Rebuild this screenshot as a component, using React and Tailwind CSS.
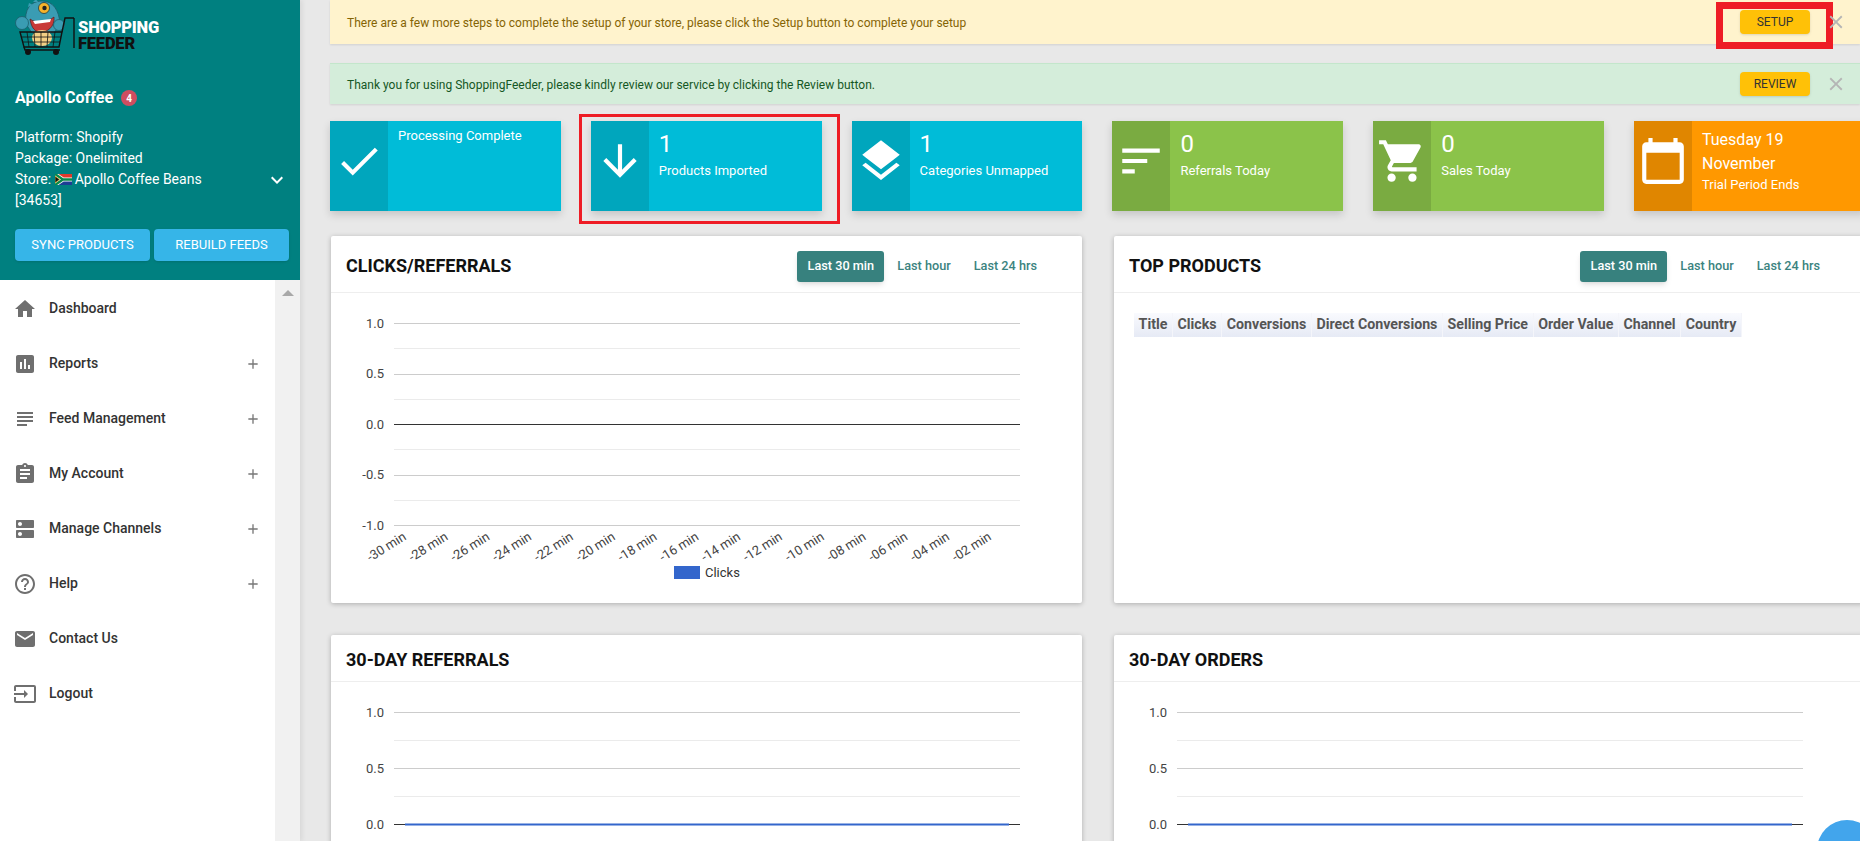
import { MdHome, MdAssessment, MdSubject, MdAssignment, MdDns, MdHelpOutline, MdEmail, MdInput, MdAdd, MdCheck, MdArrowDownward, MdLayers, MdSort, MdShoppingCart, MdCalendarToday, MdKeyboardArrowDown, MdClose } from 'react-icons/md';

const menu = [
  { label: 'Dashboard', icon: MdHome },
  { label: 'Reports', icon: MdAssessment, more: true },
  { label: 'Feed Management', icon: MdSubject, more: true },
  { label: 'My Account', icon: MdAssignment, more: true },
  { label: 'Manage Channels', icon: MdDns, more: true },
  { label: 'Help', icon: MdHelpOutline, more: true },
  { label: 'Contact Us', icon: MdEmail },
  { label: 'Logout', icon: MdInput },
];

const ticks = ['-30 min', '-28 min', '-26 min', '-24 min', '-22 min', '-20 min', '-18 min', '-16 min', '-14 min', '-12 min', '-10 min', '-08 min', '-06 min', '-04 min', '-02 min'];
const columns = ['Title', 'Clicks', 'Conversions', 'Direct Conversions', 'Selling Price', 'Order Value', 'Channel', 'Country'];

function Logo() {
  return (
    <div className="flex items-start h-[60px] pl-[15px]">
      <svg width="62" height="58" viewBox="15 0 62 58" className="shrink-0">
        <path d="M26 24 C24 10 30 1 42 1 C53 1 59 10 60 24 L54 33 L32 33 Z" fill="#3a9cb3" stroke="#1d5d6b" strokeWidth="0.8" />
        <path d="M33 2 L36 -1 L38 2 Z M28 7 L29 3 L33 5 Z" fill="#3a9cb3" />
        <circle cx="44" cy="8" r="5.5" fill="#f7b32b" stroke="#1b3b44" strokeWidth="0.8" />
        <circle cx="44.5" cy="8" r="2.2" fill="#222" />
        <path d="M30 19 C36 24 48 22 54 17 C55 27 47 33 39 32 C33 31 31 25 30 19 Z" fill="#c83a38" stroke="#5a1a1a" strokeWidth="0.7" />
        <path d="M33 21 L51 19 L50 22 L35 24 Z" fill="#fff" />
        <circle cx="22" cy="23" r="6.5" fill="#3a9cb3" stroke="#1d5d6b" strokeWidth="0.8" />
        <circle cx="59" cy="25" r="5.5" fill="#3a9cb3" stroke="#1d5d6b" strokeWidth="0.8" />
        <ellipse cx="42" cy="38" rx="10" ry="8" fill="#f3cf85" />
        <path d="M20 32 H62 L59 47 H24 Z" fill="none" stroke="#111" strokeWidth="1.4" />
        <path d="M27 32 L29 47 M34 32 L35 47 M41 32 V47 M48 32 L47 47 M55 32 L53 47 M22 37 H61 M23 42 H60" stroke="#111" strokeWidth="0.8" />
        <path d="M24 47 L25 50 H60 M62 32 L65 18 H74" fill="none" stroke="#111" strokeWidth="1.4" />
        <circle cx="28" cy="52" r="3" fill="#111" />
        <circle cx="56" cy="52" r="3" fill="#111" />
        <path d="M74 18 V48" stroke="#111" strokeWidth="1.4" />
      </svg>
      <div className="ml-[1px] pt-[20px] font-['Roboto',sans-serif] font-black text-[16.5px] leading-[16px] tracking-[-0.2px]">
        <div className="text-white">SHOPPING</div>
        <div className="text-[#111]">FEEDER</div>
      </div>
    </div>
  );
}

function Flag() {
  return (
    <svg width="17" height="11" viewBox="0 0 17 11" className="inline-block mr-[3px] mb-[1px]">
      <rect width="17" height="5.5" fill="#e0392b" />
      <rect y="5.5" width="17" height="5.5" fill="#1c3f94" />
      <path d="M0 0 L8 5.5 L0 11 M8 5.5 H17" fill="none" stroke="#fff" strokeWidth="4" />
      <path d="M0 0 L8 5.5 L0 11 M8 5.5 H17" fill="none" stroke="#0a8a4a" strokeWidth="2.4" />
      <path d="M0 2 L4.6 5.5 L0 9 Z" fill="#111" stroke="#f4c430" strokeWidth="0.7" />
    </svg>
  );
}

function Sidebar() {
  return (
    <aside className="w-[300px] h-full shrink-0 flex flex-col shadow-[2px_0_5px_rgba(0,0,0,0.08)] font-['Roboto',sans-serif]">
      <div className="h-[280px] shrink-0 bg-[#008080] text-white">
        <Logo />
        <div className="flex items-center px-[15px] mt-[27px] h-[22px]">
          <span className="text-[16px] font-bold">Apollo Coffee</span>
          <span className="ml-[8px] w-[16px] h-[16px] rounded-full bg-[#cf4d60] text-[10px] font-bold flex items-center justify-center">4</span>
        </div>
        <div className="pl-[15px] pr-[11px] mt-[18px] text-[14px] leading-[21px]">
          <div>Platform: Shopify</div>
          <div>Package: Onelimited</div>
          <div className="flex items-start justify-between h-[21px]">
            <div>Store: <Flag />Apollo Coffee Beans</div>
            <MdKeyboardArrowDown size={24} className="mt-[-1px]" />
          </div>
          <div>[34653]</div>
        </div>
        <div className="flex gap-[4px] pl-[15px] pr-[11px] mt-[18px]">
          <button className="w-[135px] h-[32px] rounded-[4px] bg-[#36b5e8] text-[13px] shadow">SYNC PRODUCTS</button>
          <button className="w-[135px] h-[32px] rounded-[4px] bg-[#36b5e8] text-[13px] shadow">REBUILD FEEDS</button>
        </div>
      </div>
      <div className="flex-1 flex bg-white">
        <nav className="w-[275px]">
          {menu.map(item => (
            <div key={item.label} className="h-[55px] flex items-center pl-[13px] pr-[14px] first:mt-[1px]">
              <item.icon size={24} className="text-[#6f6f6f] shrink-0" />
              <span className="ml-[12px] text-[14px] font-medium text-[#333]">{item.label}</span>
              {item.more && <MdAdd size={16} className="ml-auto text-[#777]" />}
            </div>
          ))}
        </nav>
        <div className="w-[25px] bg-[#f1f1f1] flex justify-center pt-[10px]">
          <div className="w-0 h-0 border-x-[6px] border-x-transparent border-b-[6px] border-b-[#a8a8a8]" />
        </div>
      </div>
    </aside>
  );
}

function Alert({ tone, text, action, highlight, className }) {
  return (
    <div className={`h-[44px] flex items-center pl-[17px] text-[12px] shadow-[0_1px_2px_rgba(0,0,0,0.1)] ${tone} ${className}`}>
      <span className="pt-[1px]">{text}</span>
      <div className="ml-auto relative w-[70px] h-[24px] mr-[50px]">
        <button className="w-full h-full rounded-[4px] bg-[#ffc107] text-[#333] text-[12px] shadow-sm">{action}</button>
        {highlight && <div className="absolute left-[-24px] top-[-8px] w-[117px] h-[47px] border-[7px] border-[#ee1c25]" />}
        <MdClose size={22} className="absolute right-[-37px] top-[1px] text-[#b5b5b5]" />
      </div>
    </div>
  );
}

function Stat({ tone, dark, icon: Icon, value, lines, label, highlight }) {
  return (
    <div className={`relative w-[230.8px] h-[90px] shrink-0 flex text-white shadow-[0_4px_8px_rgba(0,0,0,0.15)] ${tone}`}>
      <div className={`w-[58px] shrink-0 flex items-center justify-center pb-[10px] ${dark}`}>
        <Icon size={50} />
      </div>
      <div className="pl-[10px] pt-[5px]">
        {value && <div className="text-[24px] leading-[30px] mt-[3px] mb-[2px]">{value}</div>}
        {lines && lines.map((l, i) => <div key={l} className={`text-[16px] leading-[24px] ${i === 0 ? 'mt-[2px]' : ''}`}>{l}</div>)}
        <div className={`text-[13px] leading-[20px] ${lines ? 'mt-[-1px]' : ''}`}>{label}</div>
      </div>
      {highlight && <div className="absolute left-[-12px] top-[-7px] w-[261px] h-[110px] border-[3px] border-[#ee1c25]" />}
    </div>
  );
}

function Tabs() {
  return (
    <div className="ml-auto mt-[1px] flex items-center text-[12.7px] font-medium text-[#3b8380] mr-[45px]">
      <span className="w-[87px] h-[31px] rounded-[3px] bg-[#37817e] text-white flex items-center justify-center shadow-md">Last 30 min</span>
      <span className="ml-[13px]">Last hour</span>
      <span className="ml-[23px]">Last 24 hrs</span>
    </div>
  );
}

function Card({ title, tabs, children, className }) {
  return (
    <div className={`w-[751px] shrink-0 bg-white rounded-[2px] shadow-[0_1px_5px_rgba(0,0,0,0.25)] font-['Roboto',sans-serif] ${className}`}>
      <div className={`flex items-center pl-[15px] pt-[3px] border-b border-[#eee] ${tabs ? 'h-[57px]' : 'h-[47px]'}`}>
        <h2 className="text-[18px] font-bold text-[#111]">{title}</h2>
        {tabs && <Tabs />}
      </div>
      {children}
    </div>
  );
}

// google-charts style line chart, all y values counted from the card body
function Chart({ top, step, labels, labelsX, flat }) {
  const rows = (labels.length - 1) * 2;
  const zero = labels.indexOf('0.0') * 2;
  return (
    <svg width="751" height="310" viewBox="0 0 751 310" className="block font-['Roboto',sans-serif]">
      {Array.from({ length: rows + 1 }).map((_, i) => (
        <line key={i} x1="63" x2="689" y1={Math.round(top + i * step) + 0.5} y2={Math.round(top + i * step) + 0.5}
          stroke={i === zero ? '#333' : i % 2 === 0 ? '#ccc' : '#ebebeb'} />
      ))}
      {labels.map((l, i) => (
        <text key={l} x={53} y={top + i * 2 * step + 4.5} textAnchor="end" fontSize="13" fill="#444">{l}</text>
      ))}
      {flat && <line x1="74" x2="678" y1={top + zero * step + 0.5} y2={top + zero * step + 0.5} stroke="#3366cc" strokeWidth="2" />}
      {labelsX && ticks.map((t, i) => (
        <text key={t} transform={`translate(${76 + i * 41.8} 246) rotate(-32)`} textAnchor="end" fontSize="13" fill="#444">{t}</text>
      ))}
      {labelsX && (
        <>
          <rect x="343" y="273" width="26" height="13" fill="#3366cc" />
          <text x="374" y="284" fontSize="13" fill="#333">Clicks</text>
        </>
      )}
    </svg>
  );
}

export default function App() {
  return (
    <div className="relative w-full h-screen overflow-hidden flex bg-[#e8e8e8] font-['Roboto',sans-serif]">
      <Sidebar />
      <main className="flex-1 min-w-0 h-full overflow-hidden pl-[30px]">
        <Alert tone="bg-[#fff3cd] text-[#856404]" text="There are a few more steps to complete the setup of your store, please click the Setup button to complete your setup" action="SETUP" highlight />
        <Alert tone="bg-[#d4edda] text-[#155724] border-t border-[#c3e6cb]" text="Thank you for using ShoppingFeeder, please kindly review our service by clicking the Review button." action="REVIEW" className="mt-[19px] !h-[41px]" />

        <div className="flex gap-[30px] mt-[17px]">
          <Stat tone="bg-[#00bcd8]" dark="bg-[#00a6bd]" icon={MdCheck} label="Processing Complete" />
          <Stat tone="bg-[#00bcd8]" dark="bg-[#00a6bd]" icon={MdArrowDownward} value="1" label="Products Imported" highlight />
          <Stat tone="bg-[#00bcd8]" dark="bg-[#00a6bd]" icon={MdLayers} value="1" label="Categories Unmapped" />
          <Stat tone="bg-[#8bc34a]" dark="bg-[#7aab41]" icon={MdSort} value="0" label="Referrals Today" />
          <Stat tone="bg-[#8bc34a]" dark="bg-[#7aab41]" icon={MdShoppingCart} value="0" label="Sales Today" />
          <Stat tone="bg-[#ff9800]" dark="bg-[#e08600]" icon={MdCalendarToday} lines={['Tuesday 19', 'November']} label="Trial Period Ends" />
        </div>

        <div className="flex gap-[32px] mt-[25px] ml-[1px]">
          <Card title="CLICKS/REFERRALS" tabs className="h-[367px]">
            <Chart top={30} step={25.25} labels={['1.0', '0.5', '0.0', '-0.5', '-1.0']} labelsX />
          </Card>
          <Card title="TOP PRODUCTS" tabs className="h-[367px]">
            <table className="ml-[20px] mt-[20px] border-collapse">
              <thead>
                <tr className="h-[24px] bg-gradient-to-b from-[#f9fafe] to-[#e6eaf5]">
                  {columns.map(c => (
                    <th key={c} className="px-[4.6px] text-[14.2px] font-bold text-[#555] border-r border-[#f4f5fa] whitespace-nowrap">{c}</th>
                  ))}
                </tr>
              </thead>
            </table>
          </Card>
        </div>

        <div className="flex gap-[32px] mt-[32px] ml-[1px]">
          <Card title="30-DAY REFERRALS">
            <Chart top={30} step={28} labels={['1.0', '0.5', '0.0']} flat />
          </Card>
          <Card title="30-DAY ORDERS">
            <Chart top={30} step={28} labels={['1.0', '0.5', '0.0']} flat />
          </Card>
        </div>
      </main>
      <div className="absolute left-[1817px] top-[820px] w-[60px] h-[60px] rounded-full bg-[#42a5ec]" />
    </div>
  );
}
